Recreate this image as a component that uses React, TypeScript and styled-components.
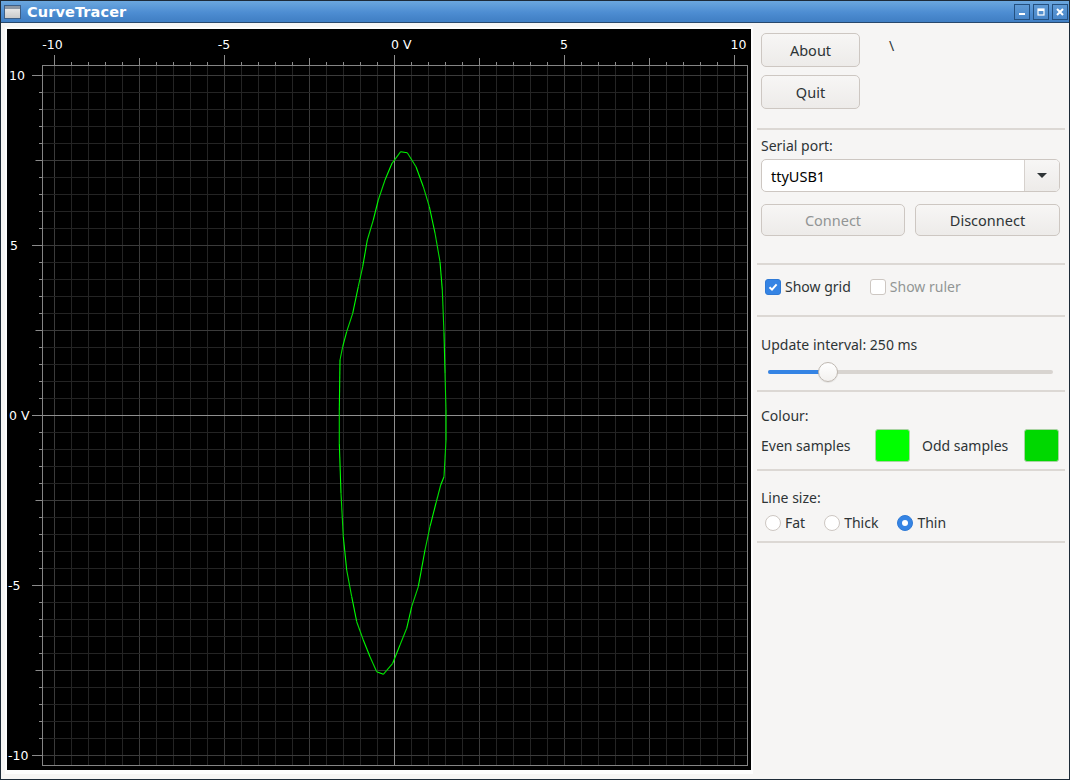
import React from "react";
import styled, { createGlobalStyle } from "styled-components";

const GlobalStyle = createGlobalStyle`
  html, body {
    margin: 0;
    padding: 0;
    background: #f6f5f4;
  }
  body {
    width: 1070px;
    height: 780px;
    overflow: hidden;
    font-family: "Noto Sans", "Open Sans", sans-serif;
  }
`;

const Window = styled.div`
  width: 1070px;
  height: 780px;
  box-sizing: border-box;
  border: 1px solid #1d2a37;
  display: flex;
  flex-direction: column;
  background: #f6f5f4;
`;

const TitleBar = styled.div`
  height: 21px;
  flex: none;
  display: flex;
  align-items: center;
  padding: 0 1px 0 3px;
  background: linear-gradient(#6ba7de, #4d8dd2 55%, #3f7ec3);
  border-bottom: 1px solid #27486c;
`;

const TitleText = styled.div`
  margin-left: 6px;
  flex: 1;
  color: #fff;
  font-family: "DejaVu Sans", sans-serif;
  font-weight: bold;
  font-size: 14.5px;
  letter-spacing: 0.1px;
`;

const WinButton = styled.div`
  width: 14px;
  height: 14px;
  margin-left: 3px;
  border: 1px solid #24507f;
  background: linear-gradient(#5f9bd6, #4886c9);
  display: flex;
  align-items: center;
  justify-content: center;
`;

const Body = styled.div`
  flex: 1;
  display: flex;
  padding: 4px 3px 0 4px;
  min-height: 0;
`;

const PlotFrame = styled.div`
  width: 744px;
  height: 741px;
  padding: 2px 2px 4px 2px;
  background: #fdfdfd;
  flex: none;
`;

const Canvas = styled.div`
  width: 744px;
  height: 741px;
  background: #000;
`;

const Panel = styled.div`
  width: 308px;
  margin-left: 4px;
  display: flex;
  flex-direction: column;
  color: #2e3436;
  font-size: 14px;
`;

const Section = styled.div<{ $top: number; $bottom: number; $gap: number }>`
  display: flex;
  flex-direction: column;
  gap: ${(p) => p.$gap}px;
  padding: ${(p) => p.$top}px 5px ${(p) => p.$bottom}px 4px;
  border-bottom: 2px solid #dcd8d4;
`;

const Row = styled.div<{ $gap?: number; $mt?: number }>`
  display: flex;
  align-items: center;
  gap: ${(p) => p.$gap ?? 0}px;
  margin-top: ${(p) => p.$mt ?? 0}px;
`;

const Label = styled.div`
  line-height: 18px;
  height: 18px;
  white-space: nowrap;
`;

const Button = styled.div<{ $w: number; $h: number; $disabled?: boolean }>`
  width: ${(p) => p.$w - 2}px;
  height: ${(p) => p.$h}px;
  border: 1px solid #cdc7c2;
  border-radius: 5px;
  background: linear-gradient(#f7f6f5, #edebe9);
  display: flex;
  align-items: center;
  justify-content: center;
  color: ${(p) => (p.$disabled ? "#929595" : "#2e3436")};
  font-size: 14.5px;
`;

const Backslash = styled.div`
  margin-left: 29px;
  align-self: flex-start;
  margin-top: 3px;
  font-size: 14px;
  color: #2e3436;
`;

const Combo = styled.div`
  height: 31px;
  border: 1px solid #cdc7c2;
  border-radius: 5px;
  background: #fff;
  display: flex;
  overflow: hidden;
`;

const ComboText = styled.div`
  flex: 1;
  display: flex;
  align-items: center;
  padding-left: 9px;
  color: #000;
  font-size: 14.5px;
`;

const ComboArrow = styled.div`
  width: 34px;
  border-left: 1px solid #d6d1cd;
  background: linear-gradient(#f7f6f5, #edebe9);
  display: flex;
  align-items: center;
  justify-content: center;
  &::after {
    content: "";
    border-left: 5px solid transparent;
    border-right: 5px solid transparent;
    border-top: 5px solid #2e3436;
  }
`;

const Check = styled.div<{ $on?: boolean }>`
  width: 14px;
  height: 14px;
  border-radius: 3px;
  border: 1px solid ${(p) => (p.$on ? "#2f7ad6" : "#cdc7c2")};
  background: ${(p) => (p.$on ? "#3584e4" : "#fff")};
  display: flex;
  align-items: center;
  justify-content: center;
`;

const Radio = styled.div<{ $on?: boolean }>`
  width: 14px;
  height: 14px;
  border-radius: 50%;
  border: 1px solid ${(p) => (p.$on ? "#2f7ad6" : "#cdc7c2")};
  background: ${(p) => (p.$on ? "#3584e4" : "#fff")};
  display: flex;
  align-items: center;
  justify-content: center;
  &::after {
    content: "";
    display: ${(p) => (p.$on ? "block" : "none")};
    width: 6px;
    height: 6px;
    border-radius: 50%;
    background: #fff;
  }
`;

const Option = styled.div<{ $dim?: boolean }>`
  display: flex;
  align-items: center;
  gap: 4px;
  line-height: 18px;
  color: ${(p) => (p.$dim ? "#929595" : "#2e3436")};
`;

const OptionRow = styled.div`
  display: flex;
  align-items: center;
  gap: 19px;
  padding-left: 4px;
  height: 18px;
`;

const SliderWrap = styled.div`
  height: 20px;
  position: relative;
  margin: 0 7px 0 7px;
  display: flex;
  align-items: center;
`;

const Track = styled.div`
  flex: 1;
  height: 4px;
  border-radius: 2px;
  background: #d8d4d0;
`;

const TrackFill = styled.div`
  height: 100%;
  border-radius: 2px;
  background: #3584e4;
`;

const Handle = styled.div`
  position: absolute;
  top: 0;
  width: 18px;
  height: 18px;
  border-radius: 50%;
  border: 1px solid #bfb8b1;
  background: linear-gradient(#ffffff, #f3f1ef);
  box-shadow: 0 1px 1px rgba(0, 0, 0, 0.08);
`;

const SwatchGrid = styled.div`
  display: grid;
  grid-template-columns: 114px 35px 114px 35px;
  align-items: center;
  height: 33px;
`;

const SwatchLabel = styled.div<{ $inset?: number }>`
  padding-left: ${(p) => p.$inset ?? 0}px;
  white-space: nowrap;
`;

const Swatch = styled.div<{ $color: string }>`
  height: 31px;
  border: 1px solid #a9d3a2;
  border-radius: 3px;
  background: ${(p) => p.$color};
`;

// plot geometry: 34px per volt, origin inside the black canvas
const X = (v: number) => 387 + 34 * v;
const Y = (v: number) => 386.5 - 34 * v;
const FL = 35.5, FR = 740.5, FT = 36.5, FB = 736.5;

const curveAbs: [number, number][] = [
  [400.7, 151.7], [407.3, 152.7], [416, 166.7], [423.3, 186.7], [429.3, 206.7], [435, 233],
  [440, 261.7], [442.3, 290], [444, 333], [445, 373], [446, 410], [446, 440], [444, 476.7],
  [440.7, 485], [436, 503], [430, 526.7], [425, 550], [418.3, 586.7], [411.7, 606.7],
  [406.7, 628.3], [400, 645], [392.7, 663.3], [383.3, 674.3], [376.7, 671.7], [370, 656.7],
  [363.3, 640], [356.7, 621.7], [351.7, 596.7], [346.7, 570], [343.3, 536.7], [341, 493.3],
  [339.3, 443.3], [339.3, 410], [340, 360], [342.7, 346.7], [346.7, 331.7], [352.7, 313.3],
  [358.3, 286.7], [362.7, 266.7], [367.3, 240], [373.3, 220], [378.3, 200], [385, 180],
  [392, 163.3], [400.7, 151.7],
];

const Plot = () => {
  const steps = Array.from({ length: 41 }, (_, k) => k - 20);
  const gridColor = (i: number) => (i % 5 === 0 ? "#3b3b3b" : "#242424");
  const tickTop = (i: number) => (i % 10 === 0 ? 26 : i % 5 === 0 ? 29 : 33);
  const tickLeft = (i: number) => (i % 10 === 0 ? 25 : i % 5 === 0 ? 28.5 : 32);
  const pts = curveAbs.map(([x, y]) => [x - 7, y - 29]);
  return (
    <svg width="744" height="741" viewBox="0 0 744 741" style={{ display: "block" }}>
      {steps.filter((i) => i !== 0).map((i) => (
        <line key={"v" + i} x1={X(i / 2) + 0.5} x2={X(i / 2) + 0.5} y1={FT} y2={FB} stroke={gridColor(i)} />
      ))}
      {steps.filter((i) => i !== 0).map((i) => (
        <line key={"h" + i} x1={FL} x2={FR} y1={Y(i / 2)} y2={Y(i / 2)} stroke={gridColor(i)} />
      ))}
      {steps.map((i) => (
        <line key={"tt" + i} x1={X(i / 2) + 0.5} x2={X(i / 2) + 0.5} y1={tickTop(i)} y2={FT} stroke="#8a8a8a" />
      ))}
      {steps.map((i) => (
        <line key={"tl" + i} x1={tickLeft(i)} x2={FL} y1={Y(i / 2)} y2={Y(i / 2)} stroke="#8a8a8a" />
      ))}
      <line x1={X(0) + 0.5} x2={X(0) + 0.5} y1={26} y2={FB} stroke="#8f8f8f" />
      <line x1={25} x2={FR} y1={Y(0)} y2={Y(0)} stroke="#8f8f8f" />
      <rect x={FL} y={FT} width={FR - FL} height={FB - FT} fill="none" stroke="#858585" />
      {pts.slice(1).map(([x, y], k) => (
        <line key={"c" + k} x1={pts[k][0]} y1={pts[k][1]} x2={x} y2={y} stroke={k % 2 ? "#00dd00" : "#00ff00"} strokeWidth="1.1" />
      ))}
      <g fill="#fff" fontFamily="'DejaVu Sans', sans-serif" fontSize="12.5">
        <text x={45.5} y={19.5} textAnchor="middle">-10</text>
        <text x={217} y={19.5} textAnchor="middle">-5</text>
        <text x={384} y={19.5}>0 V</text>
        <text x={557} y={19.5} textAnchor="middle">5</text>
        <text x={731.5} y={19.5} textAnchor="middle">10</text>
        <text x={2} y={Y(10) + 4.5}>10</text>
        <text x={3} y={Y(5) + 4.5}>5</text>
        <text x={2} y={Y(0) + 4.5}>0 V</text>
        <text x={1} y={Y(-5) + 4.5}>-5</text>
        <text x={1} y={Y(-10) + 4.5}>-10</text>
      </g>
    </svg>
  );
};

const AppIcon = () => (
  <svg width="17" height="16" viewBox="0 0 17 16">
    <defs>
      <linearGradient id="ig" x1="0" y1="0" x2="0" y2="1">
        <stop offset="0" stopColor="#f2f2f2" />
        <stop offset="1" stopColor="#c8c8c8" />
      </linearGradient>
    </defs>
    <rect x="0.5" y="1.5" width="16" height="13" fill="url(#ig)" stroke="#3e5f86" />
    <rect x="1" y="2" width="15" height="3" fill="#8d97a3" />
  </svg>
);

export default function App() {
  return (
    <>
      <GlobalStyle />
      <Window>
        <TitleBar>
          <AppIcon />
          <TitleText>CurveTracer</TitleText>
          <WinButton>
            <svg width="8" height="8" viewBox="0 0 8 8"><rect x="1" y="5" width="6" height="2" fill="#fff" /></svg>
          </WinButton>
          <WinButton>
            <svg width="8" height="8" viewBox="0 0 8 8"><rect x="1" y="1" width="6" height="6" fill="none" stroke="#fff" strokeWidth="1.2" /><rect x="1" y="1" width="6" height="2" fill="#fff" /></svg>
          </WinButton>
          <WinButton>
            <svg width="8" height="8" viewBox="0 0 8 8"><path d="M1 1 L7 7 M7 1 L1 7" stroke="#fff" strokeWidth="2" /></svg>
          </WinButton>
        </TitleBar>
        <Body>
          <PlotFrame>
            <Canvas>
              <Plot />
            </Canvas>
          </PlotFrame>
          <Panel>
            <Section $top={6} $bottom={19} $gap={8}>
              <Row>
                <Button $w={99} $h={32}>About</Button>
                <Backslash>\</Backslash>
              </Row>
              <Row>
                <Button $w={99} $h={32}>Quit</Button>
              </Row>
            </Section>
            <Section $top={7} $bottom={27} $gap={4}>
              <Label>Serial port:</Label>
              <Combo>
                <ComboText>ttyUSB1</ComboText>
                <ComboArrow />
              </Combo>
              <Row $gap={10} $mt={8}>
                <Button $w={144} $h={30} $disabled>Connect</Button>
                <Button $w={145} $h={30}>Disconnect</Button>
              </Row>
            </Section>
            <Section $top={13} $bottom={19} $gap={0}>
              <OptionRow>
                <Option>
                  <Check $on>
                    <svg width="10" height="10" viewBox="0 0 10 10"><path d="M1.5 5.2 L4 7.6 L8.6 2.4" fill="none" stroke="#fff" strokeWidth="2" /></svg>
                  </Check>
                  Show grid
                </Option>
                <Option $dim>
                  <Check />
                  Show ruler
                </Option>
              </OptionRow>
            </Section>
            <Section $top={19} $bottom={8} $gap={8}>
              <Label>Update interval: 250 ms</Label>
              <SliderWrap>
                <Track>
                  <TrackFill style={{ width: 60 }} />
                </Track>
                <Handle style={{ left: 50 }} />
              </SliderWrap>
            </Section>
            <Section $top={15} $bottom={7} $gap={4}>
              <Label>Colour:</Label>
              <SwatchGrid>
                <SwatchLabel>Even samples</SwatchLabel>
                <Swatch $color="#00ff00" />
                <SwatchLabel $inset={12}>Odd samples</SwatchLabel>
                <Swatch $color="#00d800" />
              </SwatchGrid>
            </Section>
            <Section $top={18} $bottom={9} $gap={7}>
              <Label>Line size:</Label>
              <OptionRow>
                <Option><Radio />Fat</Option>
                <Option><Radio />Thick</Option>
                <Option><Radio $on />Thin</Option>
              </OptionRow>
            </Section>
          </Panel>
        </Body>
      </Window>
    </>
  );
}
